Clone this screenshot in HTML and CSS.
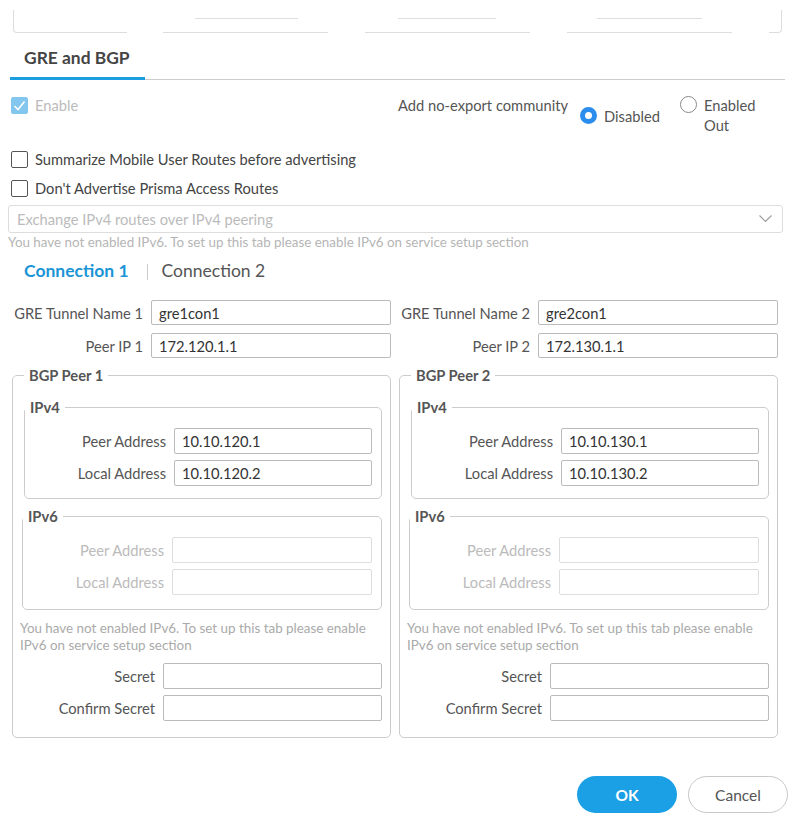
FILE: index.html
```html
<!DOCTYPE html>
<html lang="en">
<head>
    <meta charset="UTF-8">
    <meta name="viewport" content="width=device-width, initial-scale=1.0">
    <title>GRE and BGP</title>
    <link rel="stylesheet" href="styles.css">
</head>
<body>
    <!-- bottom edge of the section above, cut off by the scroll -->
    <div class="prev">
        <span class="prev-seg first"></span>
        <span class="prev-seg"><i style="margin-left: 32px; width: 103px"></i></span>
        <span class="prev-seg"><i style="margin-left: 33px; width: 98px"></i></span>
        <span class="prev-seg"><i style="margin-left: 30px; width: 105px"></i></span>
        <span class="prev-seg last"></span>
    </div>

    <div class="dialog">
        <div class="tabs">
            <div class="tab active">GRE and BGP</div>
        </div>

        <div class="options-row">
            <div class="check disabled">
                <span class="box checked">
                    <svg width="13" height="11" viewBox="0 0 13 11"><polyline points="1.5,6 5,9.5 11.5,1.5" fill="none" stroke="#fff" stroke-width="1.6"/></svg>
                </span>
                <span>Enable</span>
            </div>
            <div class="community">
                <div class="community-label">Add no-export community</div>
                <div class="radio radio-low">
                    <span class="dot on"></span>
                    <span>Disabled</span>
                </div>
                <div class="radio">
                    <span class="dot"></span>
                    <span class="radio-text">Enabled Out</span>
                </div>
            </div>
        </div>

        <div class="check-list">
            <div class="check">
                <span class="box"></span>
                <span>Summarize Mobile User Routes before advertising</span>
            </div>
            <div class="check">
                <span class="box"></span>
                <span>Don't Advertise Prisma Access Routes</span>
            </div>
        </div>

        <div class="select">
            <span>Exchange IPv4 routes over IPv4 peering</span>
            <svg width="13" height="8" viewBox="0 0 13 8"><polyline points="0.5,0.5 6.5,6.5 12.5,0.5" fill="none" stroke="#9a9a9a" stroke-width="1.1"/></svg>
        </div>
        <div class="hint">You have not enabled IPv6. To set up this tab please enable IPv6 on service setup section</div>

        <div class="conn-tabs">
            <span class="conn active">Connection 1</span>
            <span class="conn-sep"></span>
            <span class="conn">Connection 2</span>
        </div>

        <div class="columns">
            <div class="column">
                <div class="field-row top-row">
                    <label>GRE Tunnel Name 1</label>
                    <input type="text" value="gre1con1">
                </div>
                <div class="field-row top-row">
                    <label>Peer IP 1</label>
                    <input type="text" value="172.120.1.1">
                </div>
                <fieldset class="peer">
                    <legend>BGP Peer 1</legend>
                    <fieldset class="ipbox">
                        <legend>IPv4</legend>
                        <div class="field-row addr-row">
                            <label>Peer Address</label>
                            <input type="text" value="10.10.120.1">
                        </div>
                        <div class="field-row addr-row">
                            <label>Local Address</label>
                            <input type="text" value="10.10.120.2">
                        </div>
                    </fieldset>
                    <fieldset class="ipbox off">
                        <legend>IPv6</legend>
                        <div class="field-row addr-row">
                            <label>Peer Address</label>
                            <input type="text" disabled>
                        </div>
                        <div class="field-row addr-row">
                            <label>Local Address</label>
                            <input type="text" disabled>
                        </div>
                    </fieldset>
                    <div class="hint peer-hint">You have not enabled IPv6. To set up this tab please enable IPv6 on service setup section</div>
                    <div class="field-row secret-row">
                        <label>Secret</label>
                        <input type="password">
                    </div>
                    <div class="field-row secret-row">
                        <label>Confirm Secret</label>
                        <input type="password">
                    </div>
                </fieldset>
            </div>

            <div class="column">
                <div class="field-row top-row">
                    <label>GRE Tunnel Name 2</label>
                    <input type="text" value="gre2con1">
                </div>
                <div class="field-row top-row">
                    <label>Peer IP 2</label>
                    <input type="text" value="172.130.1.1">
                </div>
                <fieldset class="peer">
                    <legend>BGP Peer 2</legend>
                    <fieldset class="ipbox">
                        <legend>IPv4</legend>
                        <div class="field-row addr-row">
                            <label>Peer Address</label>
                            <input type="text" value="10.10.130.1">
                        </div>
                        <div class="field-row addr-row">
                            <label>Local Address</label>
                            <input type="text" value="10.10.130.2">
                        </div>
                    </fieldset>
                    <fieldset class="ipbox off">
                        <legend>IPv6</legend>
                        <div class="field-row addr-row">
                            <label>Peer Address</label>
                            <input type="text" disabled>
                        </div>
                        <div class="field-row addr-row">
                            <label>Local Address</label>
                            <input type="text" disabled>
                        </div>
                    </fieldset>
                    <div class="hint peer-hint">You have not enabled IPv6. To set up this tab please enable IPv6 on service setup section</div>
                    <div class="field-row secret-row">
                        <label>Secret</label>
                        <input type="password">
                    </div>
                    <div class="field-row secret-row">
                        <label>Confirm Secret</label>
                        <input type="password">
                    </div>
                </fieldset>
            </div>
        </div>

        <div class="actions">
            <button class="btn btn-ok">OK</button>
            <button class="btn btn-cancel">Cancel</button>
        </div>
    </div>
</body>
</html>
```

FILE: styles.css
```css
body {
    font-family: Lato, 'Open Sans', Arial, sans-serif;
    margin: 0;
    padding: 0;
    background-color: #fff;
    color: #4a4a4a;
    font-size: 14.7px;
}

/* cut-off section above */
.prev {
    height: 34px;
    display: flex;
    padding: 0 17px 0 13px;
    box-sizing: border-box;
}

.prev-seg {
    display: block;
    border-bottom: 1px solid #ddd;
    height: 33px;
    box-sizing: border-box;
    width: 165px;
    margin-right: 37px;
}

.prev-seg i {
    display: block;
    margin-top: 18px;
    border-top: 1px solid #ddd;
}

.prev-seg.first {
    width: 114px;
    margin-right: 36px;
    border-left: 1px solid #ddd;
    border-bottom-left-radius: 4px;
    height: 23px;
    margin-top: 10px;
}

.prev-seg.last {
    width: 13px;
    margin-right: 0;
    border-right: 1px solid #ddd;
    border-bottom-right-radius: 4px;
    height: 23px;
    margin-top: 10px;
}

.dialog {
    padding: 0 17px 0 8px;
}

/* main tab */
.tabs {
    margin-left: 2px;
    margin-right: -2px;
    border-bottom: 1px solid #ccc;
    display: flex;
}

.tab {
    width: 135px;
    box-sizing: border-box;
    padding: 14px 0 9px 14px;
    font-size: 17.4px;
    line-height: 20px;
    font-weight: bold;
    color: #444;
    border-bottom: 3px solid transparent;
    margin-bottom: -1px;
}

.tab.active {
    border-bottom-color: #1a9ee0;
}

/* enable + community */
.options-row {
    display: grid;
    grid-template-columns: 390px 1fr;
    margin-top: 16px;
    height: 47px;
}

.check {
    display: flex;
    align-items: center;
    gap: 7px;
    padding-left: 3px;
    line-height: 18px;
    color: #444;
}

.check.disabled {
    color: #bbb;
    align-self: start;
}

.box {
    width: 17px;
    height: 17px;
    box-sizing: border-box;
    border: 1.5px solid #555;
    border-radius: 2px;
    display: flex;
    align-items: center;
    justify-content: center;
}

.box.checked {
    background-color: #83c7ee;
    border-color: #83c7ee;
}

.community {
    display: flex;
    align-items: flex-start;
    line-height: 20px;
    margin-top: -1px;
}

.community-label {
    color: #555;
    width: 182px;
}

.radio {
    display: flex;
    align-items: flex-start;
    gap: 7px;
    color: #555;
}

.radio-low {
    margin-top: 11px;
    width: 100px;
}

.radio-text {
    width: 55px;
}

.dot {
    width: 17px;
    height: 17px;
    box-sizing: border-box;
    border: 1px solid #888;
    border-radius: 50%;
    margin-top: 1px;
    flex-shrink: 0;
}

.dot.on {
    border: 5.5px solid #2b8ded;
    background-color: #fff;
}

.check-list {
    display: flex;
    flex-direction: column;
    gap: 11px;
    margin-top: 7px;
}

.select {
    margin-top: 8px;
    height: 26px;
    border: 1px solid #ddd;
    border-radius: 3px;
    display: flex;
    align-items: center;
    justify-content: space-between;
    padding: 0 10px 0 8px;
    color: #bbb;
}

.hint {
    font-size: 13.4px;
    line-height: 16px;
    color: #b5b5b5;
    margin-top: 1px;
}

/* connection tabs */
.conn-tabs {
    display: flex;
    align-items: center;
    margin-top: 11px;
    padding-left: 16px;
    font-size: 17.5px;
    line-height: 20px;
    color: #555;
}

.conn.active {
    color: #1a95d5;
    font-weight: bold;
}

.conn-sep {
    width: 1px;
    height: 16px;
    background-color: #ccc;
    margin: 2px 14px 0 18px;
}

/* two connection columns */
.columns {
    display: grid;
    grid-template-columns: 379px 379px;
    gap: 8px;
    margin-top: 19px;
    padding-left: 4px;
}

.field-row {
    display: grid;
    gap: 8px;
    align-items: center;
}

.field-row label {
    text-align: right;
    color: #555;
    white-space: nowrap;
}

.field-row input {
    font-family: Lato, 'Open Sans', Arial, sans-serif;
    font-size: 14.7px;
    color: #333;
    height: 26px;
    box-sizing: border-box;
    border: 1px solid #bbb;
    border-radius: 2px;
    padding: 0 7px;
    width: 100%;
    outline: none;
    background: #fff;
}

.top-row {
    grid-template-columns: 131px 1fr;
    margin-bottom: 8px;
}

.top-row input {
    height: 25px;
}

fieldset {
    margin: 0;
    border: 1px solid #ccc;
    border-radius: 5px;
}

legend {
    padding: 0 5px;
    font-weight: bold;
    line-height: 18px;
    color: #555;
}

.peer {
    margin-top: 0;
    padding: 14px 8px 16px 11px;
}

.ipbox {
    padding: 12px 9px 12px 0;
}

.ipbox.off {
    margin-top: 8px;
    margin-left: -2px;
    padding-top: 12px;
    padding-bottom: 14px;
}

.addr-row {
    grid-template-columns: 1fr 198px;
}

.addr-row + .addr-row {
    margin-top: 6px;
}

.off .addr-row {
    grid-template-columns: 1fr 200px;
}

.off .field-row label {
    color: #bbb;
}

.off .field-row input {
    border-color: #ddd;
}

.peer-hint {
    margin: 10px 0 0 -4px;
    color: #aaa;
    line-height: 17px;
}

.secret-row {
    grid-template-columns: 1fr 219px;
    margin-top: 6px;
}

.peer-hint + .secret-row {
    margin-top: 9px;
}

/* buttons */
.actions {
    display: flex;
    justify-content: flex-end;
    gap: 11px;
    margin-top: 38px;
    margin-right: -5px;
}

.btn {
    width: 100px;
    height: 37px;
    border-radius: 19px;
    font-family: Lato, 'Open Sans', Arial, sans-serif;
    font-size: 15.5px;
    cursor: pointer;
}

.btn-ok {
    background-color: #1ba0e5;
    border: none;
    color: #fff;
    font-weight: bold;
}

.btn-cancel {
    background-color: #fff;
    border: 1px solid #c8c8c8;
    color: #555;
}
```
